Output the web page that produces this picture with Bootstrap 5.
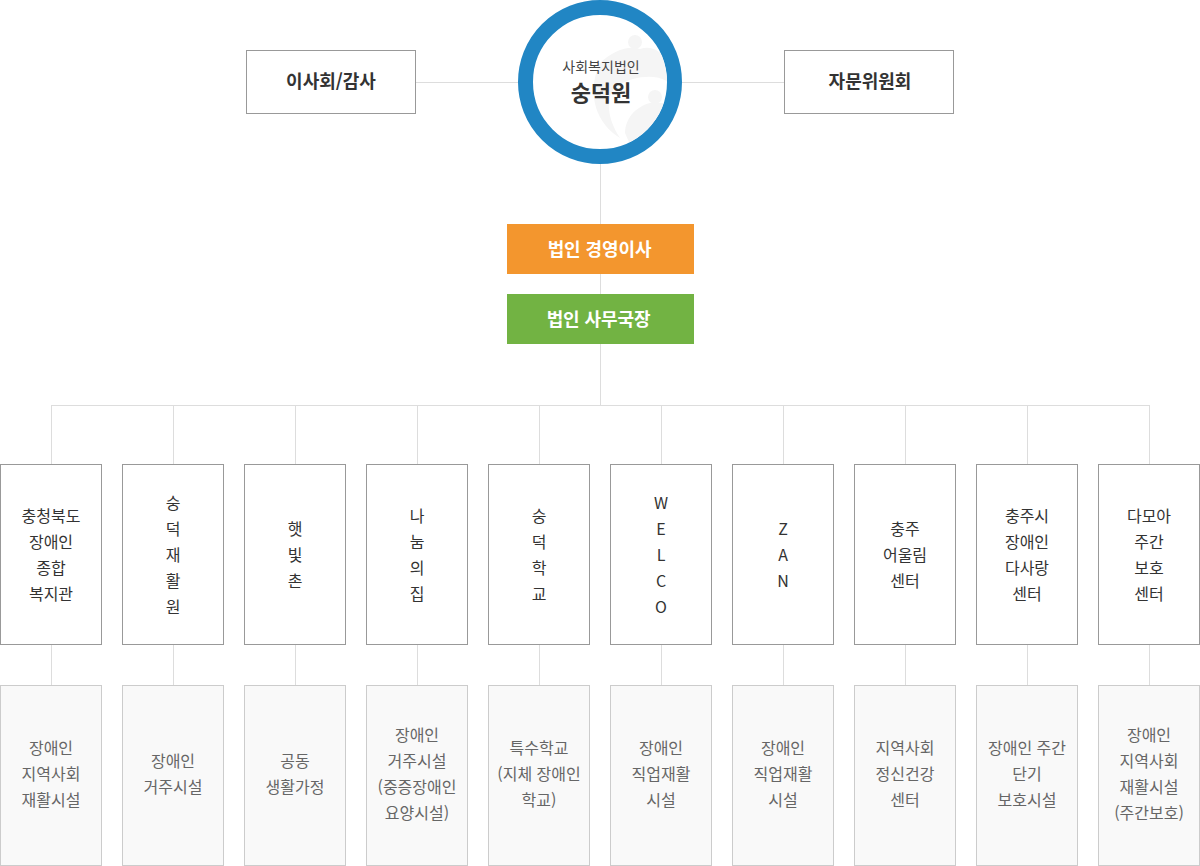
<!DOCTYPE html>
<html lang="ko"><head><meta charset="utf-8">
<link href="https://cdn.jsdelivr.net/npm/bootstrap@5.3.0/dist/css/bootstrap.min.css" rel="stylesheet">
<style>
html,body{margin:0;padding:0;background:#fff;}
body{width:1200px;height:866px;overflow:hidden;font-family:"Noto Sans CJK KR","Noto Sans",sans-serif;color:#333;}
.top-row{height:164px;padding-left:246px;}
.side-box{width:170px;height:64px;border:1px solid #999;font-size:18px;font-weight:700;color:#333;margin-top:50px;padding-bottom:3px;}
.side-right{padding-left:2px;}
.h-link{width:102px;height:1px;background:#ddd;margin-top:82px;}
.ring{width:164px;height:164px;border:15px solid #2186c4;border-radius:50%;position:relative;overflow:hidden;flex:none;}
.ring-mark{position:absolute;left:0;top:0;width:134px;height:134px;}
.ring-text{position:relative;margin-left:2px;margin-bottom:2px;}
.ring-sub{font-size:14px;line-height:20px;color:#444;}
.ring-name{font-size:22px;line-height:30px;font-weight:700;color:#333;}
.v-link{width:1px;background:#ddd;margin-left:600px;}
.v60{height:60px;}.v20{height:20px;}.v61{height:61px;}
.role-box{width:187px;height:50px;margin-left:507px;color:#fff;font-size:18px;font-weight:700;padding-bottom:1px;letter-spacing:-.1px;}
.role-orange{background:#f3962e;padding-right:2px;}
.role-green{background:#72b343;padding-right:4px;}
.bus{height:1px;background:#ddd;margin:0 50px 0 51px;}
.org-grid{display:grid;grid-template-columns:repeat(10,102px);column-gap:20px;}
.drop{width:1px;margin:0 auto;background:#ddd;}
.drop-a{height:58px;}.drop-b{height:40px;}
.org-box{height:181px;border:1px solid #999;font-size:16px;line-height:26px;color:#333;text-align:center;padding-bottom:2px;}
.sub-box{height:181px;border:1px solid #ccc;background:#f9f9f9;font-size:16px;line-height:26px;color:#666;text-align:center;padding-bottom:6px;}
</style></head><body>
<div class="top-row d-flex">
  <div class="side-box d-flex align-items-center justify-content-center">이사회/감사</div>
  <div class="h-link"></div>
  <div class="ring d-flex flex-column align-items-center justify-content-center text-center">
    <svg class="ring-mark" viewBox="0 0 134 134"><g fill="#f5f5f5"><circle cx="102" cy="27" r="7"/><path d="M67 48C80 36 95 30 107 34C118 30 128 36 134 46V66C120 58 100 62 85 70C73 78 72 100 87 123C65 110 52 80 67 48Z"/><circle cx="122" cy="82" r="7"/><path d="M92 118C92 104 102 92 117 88L134 88V134H99Z"/></g></svg>
    <div class="ring-text">
    <div class="ring-sub">사회복지법인</div>
    <div class="ring-name">숭덕원</div></div>
  </div>
  <div class="h-link"></div>
  <div class="side-box side-right d-flex align-items-center justify-content-center">자문위원회</div>
</div>
<div class="v-link v60"></div>
<div class="role-box role-orange d-flex align-items-center justify-content-center">법인 경영이사</div>
<div class="v-link v20"></div>
<div class="role-box role-green d-flex align-items-center justify-content-center">법인 사무국장</div>
<div class="v-link v61"></div>
<div class="bus"></div>
<div class="org-grid">
  <div><div class="drop drop-a"></div><div class="org-box d-flex align-items-center justify-content-center"><div>충청북도<br>장애인<br>종합<br>복지관</div></div><div class="drop drop-b"></div><div class="sub-box d-flex align-items-center justify-content-center"><div>장애인<br>지역사회<br>재활시설</div></div></div>
  <div><div class="drop drop-a"></div><div class="org-box d-flex align-items-center justify-content-center"><div>숭<br>덕<br>재<br>활<br>원</div></div><div class="drop drop-b"></div><div class="sub-box d-flex align-items-center justify-content-center"><div>장애인<br>거주시설</div></div></div>
  <div><div class="drop drop-a"></div><div class="org-box d-flex align-items-center justify-content-center"><div>햇<br>빛<br>촌</div></div><div class="drop drop-b"></div><div class="sub-box d-flex align-items-center justify-content-center"><div>공동<br>생활가정</div></div></div>
  <div><div class="drop drop-a"></div><div class="org-box d-flex align-items-center justify-content-center"><div>나<br>눔<br>의<br>집</div></div><div class="drop drop-b"></div><div class="sub-box d-flex align-items-center justify-content-center"><div>장애인<br>거주시설<br>(중증장애인<br>요양시설)</div></div></div>
  <div><div class="drop drop-a"></div><div class="org-box d-flex align-items-center justify-content-center"><div>숭<br>덕<br>학<br>교</div></div><div class="drop drop-b"></div><div class="sub-box d-flex align-items-center justify-content-center"><div>특수학교<br>(지체 장애인<br>학교)</div></div></div>
  <div><div class="drop drop-a"></div><div class="org-box d-flex align-items-center justify-content-center"><div>W<br>E<br>L<br>C<br>O</div></div><div class="drop drop-b"></div><div class="sub-box d-flex align-items-center justify-content-center"><div>장애인<br>직업재활<br>시설</div></div></div>
  <div><div class="drop drop-a"></div><div class="org-box d-flex align-items-center justify-content-center"><div>Z<br>A<br>N</div></div><div class="drop drop-b"></div><div class="sub-box d-flex align-items-center justify-content-center"><div>장애인<br>직업재활<br>시설</div></div></div>
  <div><div class="drop drop-a"></div><div class="org-box d-flex align-items-center justify-content-center"><div>충주<br>어울림<br>센터</div></div><div class="drop drop-b"></div><div class="sub-box d-flex align-items-center justify-content-center"><div>지역사회<br>정신건강<br>센터</div></div></div>
  <div><div class="drop drop-a"></div><div class="org-box d-flex align-items-center justify-content-center"><div>충주시<br>장애인<br>다사랑<br>센터</div></div><div class="drop drop-b"></div><div class="sub-box d-flex align-items-center justify-content-center"><div>장애인 주간<br>단기<br>보호시설</div></div></div>
  <div><div class="drop drop-a"></div><div class="org-box d-flex align-items-center justify-content-center"><div>다모아<br>주간<br>보호<br>센터</div></div><div class="drop drop-b"></div><div class="sub-box d-flex align-items-center justify-content-center"><div>장애인<br>지역사회<br>재활시설<br>(주간보호)</div></div></div>
</div>
<script src="https://cdn.jsdelivr.net/npm/bootstrap@5.3.0/dist/js/bootstrap.bundle.min.js"></script>
</body></html>
